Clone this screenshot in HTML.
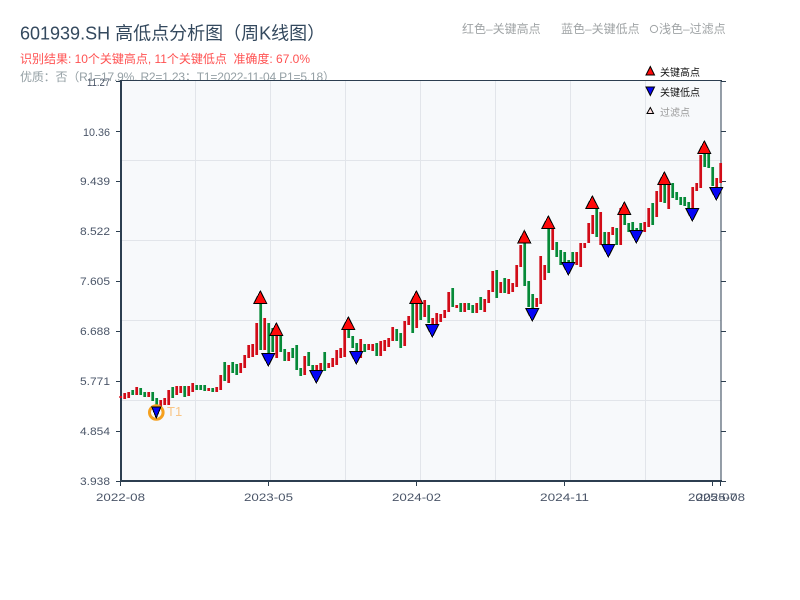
<!DOCTYPE html>
<html>
<head>
<meta charset="utf-8">
<style>
html,body{margin:0;padding:0;background:#fff;width:800px;height:600px;overflow:hidden}
svg{display:block}
text{font-family:"Liberation Sans","Noto Sans CJK SC",sans-serif}
</style>
</head>
<body>
<svg width="800" height="600" viewBox="0 0 800 600" xmlns="http://www.w3.org/2000/svg">
<rect width="800" height="600" fill="#fff"/>
<text x="20" y="39.500" font-size="18" fill="#34495e">601939.SH 高低点分析图（周K线图）</text>
<text x="20" y="63" font-size="12" fill="#ff5252" textLength="290">识别结果: 10个关键高点, 11个关键低点&#160;&#160;准确度: 67.0%</text>
<text x="20" y="81" font-size="12" fill="#95a0a5" textLength="315">优质：否（R1=17.9%, R2=1.23；T1=2022-11-04 P1=5.18）</text>
<text x="462" y="33" font-size="12" fill="#a0a4a6">红色–关键高点</text>
<text x="561" y="33" font-size="12" fill="#a0a4a6">蓝色–关键低点</text>
<circle cx="654" cy="29" r="3.6" fill="#fff" stroke="#a0a4a6" stroke-width="1"/>
<text x="659" y="33" font-size="12" fill="#a0a4a6">浅色–过滤点</text>

<rect x="121" y="81" width="600" height="400" fill="#f7f9fb"/>
<path d="M195.500 81V481M270.500 81V481M345.500 81V481M420.500 81V481M495.500 81V481M570.500 81V481M645.500 81V481M121 160.500H721M121 240.500H721M121 320.500H721M121 400.500H721" stroke="#e2e5ea" stroke-width="1" fill="none"/>

<path d="M116 81.500H121M116 131.500H121M116 181.500H121M116 231.500H121M116 281.500H121M116 331.500H121M116 381.500H121M116 431.500H121M116 481.500H121M721 81.500H726M721 131.500H726M721 181.500H726M721 231.500H726M721 281.500H726M721 331.500H726M721 381.500H726M721 431.500H726M721 481.500H726M120.500 481V486M268.500 481V486M416.500 481V486M564.500 481V486M712.500 481V486M720.500 481V486" stroke="#2c3e50" stroke-width="1" fill="none"/>
<rect x="120" y="81" width="2" height="401" fill="#2c3e50"/>
<rect x="120" y="480" width="602" height="2" fill="#2c3e50"/>
<rect x="120" y="80" width="602" height="1" fill="#2c3e50"/>
<rect x="720.500" y="80" width="1" height="401" fill="#2c3e50"/>

<g font-size="11" fill="#4a5568" text-anchor="end">
<text x="110" y="86" textLength="23" lengthAdjust="spacingAndGlyphs">11.27</text>
<text x="110" y="136" textLength="27" lengthAdjust="spacingAndGlyphs">10.36</text>
<text x="110" y="185" textLength="30" lengthAdjust="spacingAndGlyphs">9.439</text>
<text x="110" y="235" textLength="30" lengthAdjust="spacingAndGlyphs">8.522</text>
<text x="110" y="285" textLength="30" lengthAdjust="spacingAndGlyphs">7.605</text>
<text x="110" y="335" textLength="30" lengthAdjust="spacingAndGlyphs">6.688</text>
<text x="110" y="385" textLength="30" lengthAdjust="spacingAndGlyphs">5.771</text>
<text x="110" y="435" textLength="30" lengthAdjust="spacingAndGlyphs">4.854</text>
<text x="110" y="485" textLength="30" lengthAdjust="spacingAndGlyphs">3.938</text>
</g>
<g font-size="11" fill="#4a5568" text-anchor="middle">
<text x="120.500" y="501" textLength="49" lengthAdjust="spacingAndGlyphs">2022-08</text>
<text x="268.500" y="501" textLength="49" lengthAdjust="spacingAndGlyphs">2023-05</text>
<text x="416.500" y="501" textLength="49" lengthAdjust="spacingAndGlyphs">2024-02</text>
<text x="564.500" y="501" textLength="49" lengthAdjust="spacingAndGlyphs">2024-11</text>
<text x="712.500" y="501" textLength="49" lengthAdjust="spacingAndGlyphs">2025-07</text>
<text x="720.500" y="501" textLength="49" lengthAdjust="spacingAndGlyphs">2025-08</text>
</g>

<g transform="translate(.7 0)" fill="none" stroke-width="2.700">
<path stroke="#d20c18" d="M120 396V398M124 393V399M128 392V398M136 387V395M148 392V397M160 400V407M164 398V405M168 390V405M176 386V395M180 386V393M188 386V396M192 383V392M208 388V391M216 387V392M220 375V390M228 365V383M240 363V373M244 355V368M248 345V358M252 344V357M256 323V355M264 318V350M276 335V358M288 352V361M304 356V375M316 365V380M320 363V370M328 363V368M332 358V367M336 350V365M340 348V358M344 330V357M360 339V358M368 344V350M372 344V351M380 341V356M384 340V351M388 338V347M392 327V341M404 321V346M408 316V325M416 302V328M424 300V317M432 318V324M436 313V324M440 314V322M444 310V318M448 292V312M456 305V308M464 303V312M476 303V313M484 299V312M488 290V303M492 271V292M500 282V293M508 279V294M512 283V292M516 265V287M520 245V267M536 298V307M540 256V304M544 265V280M552 227V250M576 252V265M580 243V267M584 243V248M588 223V243M592 215V234M600 212V245M608 232V245M612 227V235M620 208V245M644 222V232M648 208V227M656 191V217M660 185V202M668 185V209M692 187V208M696 183V191M700 155V188M716 178V187M720 163V183"/>
<path stroke="#068a38" d="M132 390V395M140 388V395M144 392V397M152 392V401M156 398V407M172 387V398M184 386V397M196 385V390M200 385V390M204 385V391M212 388V392M224 362V381M232 362V373M236 364V375M260 303V350M268 323V358M272 328V352M280 335V352M284 349V361M292 348V358M296 345V370M300 368V376M308 352V366M312 365V371M324 352V371M348 329V338M352 336V348M356 343V352M364 344V352M376 343V356M396 329V341M400 333V348M412 302V333M420 302V320M428 305V323M452 288V307M460 303V312M468 303V310M472 305V313M480 297V310M496 270V298M504 278V293M524 243V286M528 281V307M532 294V310M548 228V273M556 242V257M560 250V265M564 252V263M568 260V268M572 252V263M596 208V237M604 232V245M616 228V245M624 213V225M628 223V232M632 222V232M636 228V235M640 223V230M652 203V225M664 183V203M672 183V198M676 192V200M680 197V205M684 197V206M688 202V208M704 153V167M708 153V168M712 167V186"/>
</g>

<g fill="#ff0a0a" stroke="#000" stroke-width="1" shape-rendering="crispEdges">
<path d="M260.300 291L266.800 303.500H253.800Z"/>
<path d="M276.300 323L282.800 335.500H269.800Z"/>
<path d="M348.300 317L354.800 329.500H341.800Z"/>
<path d="M416.300 291L422.800 303.500H409.800Z"/>
<path d="M524.300 230.500L530.800 243H517.800Z"/>
<path d="M548.300 216L554.800 228.500H541.800Z"/>
<path d="M592.300 196L598.800 208.500H585.800Z"/>
<path d="M624.300 202L630.800 214.500H617.800Z"/>
<path d="M664.300 172L670.800 184.500H657.800Z"/>
<path d="M704.300 141L710.800 153.500H697.800Z"/>
</g>
<g fill="#0505f5" stroke="#000" stroke-width="1" shape-rendering="crispEdges">
<path d="M261.800 353.500H274.800L268.300 366Z"/>
<path d="M309.800 370.500H322.800L316.300 383Z"/>
<path d="M349.800 351.500H362.800L356.300 364Z"/>
<path d="M425.800 324.500H438.800L432.300 337Z"/>
<path d="M525.800 308.500H538.800L532.300 321Z"/>
<path d="M561.800 262.500H574.800L568.300 275Z"/>
<path d="M601.800 244.500H614.800L608.300 257Z"/>
<path d="M629.800 230.500H642.800L636.300 243Z"/>
<path d="M685.800 208.500H698.800L692.300 221Z"/>
<path d="M709.800 187.500H722.800L716.300 200Z"/>
</g>

<circle cx="156.300" cy="412.500" r="6.800" fill="none" stroke="#f5a01e" stroke-width="3"/>
<path d="M151.800 407H160.800L156.300 418Z" fill="#0505f5" stroke="#000" stroke-width="1" shape-rendering="crispEdges"/>
<text x="167" y="416" font-size="13" fill="#f8c688">T1</text>

<path d="M650.300 66.500L654.500 75H646Z" fill="#ff0a0a" stroke="#000" stroke-width="1"/>
<path d="M646 87H654.500L650.300 95.500Z" fill="#0505f5" stroke="#000" stroke-width="1"/>
<path d="M650.300 107.500L653.500 113.500H647Z" fill="#ffe0e0" stroke="#000" stroke-width="1"/>
<text x="660" y="76" font-size="10" fill="#111">关键高点</text>
<text x="660" y="96" font-size="10" fill="#111">关键低点</text>
<text x="660" y="116" font-size="10" fill="#999">过滤点</text>
</svg>
</body>
</html>
